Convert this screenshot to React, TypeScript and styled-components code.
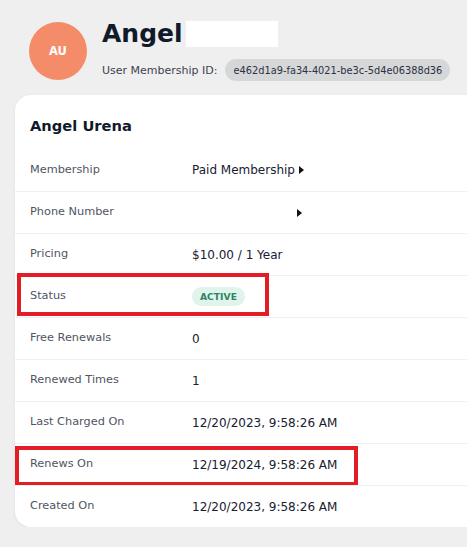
import React from 'react';
import styled, { createGlobalStyle } from 'styled-components';

const GlobalStyle = createGlobalStyle`
  body {
    margin: 0;
    background: #efefef;
    overflow: hidden;
    font-family: "DejaVu Sans", "Noto Sans", sans-serif;
    color: #172030;
  }
`;

const Page = styled.div`
  padding: 21px 0 0 15px;
`;

const Header = styled.div`
  display: flex;
  align-items: flex-start;
  gap: 15px;
  padding-left: 14px;
`;

const Avatar = styled.div`
  width: 58px;
  height: 58px;
  margin-top: 1px;
  border-radius: 50%;
  background: #f58c69;
  color: #fff;
  font-weight: 700;
  font-size: 11.5px;
  display: flex;
  align-items: center;
  justify-content: center;
`;

const HeaderText = styled.div`
  display: flex;
  flex-direction: column;
`;

const NameRow = styled.div`
  display: flex;
  align-items: center;
  height: 26px;
`;

const Name = styled.h1`
  margin: 0;
  font-size: 25px;
  font-weight: 700;
  line-height: 26px;
  color: #111a2b;
`;

const Redacted = styled.span`
  display: inline-block;
  width: 92px;
  height: 26px;
  margin-left: 3px;
  background: #fff;
`;

const IdRow = styled.div`
  display: flex;
  align-items: center;
  gap: 8px;
  margin-top: 12px;
  font-size: 11px;
  color: #3d4350;
`;

const IdPill = styled.span`
  display: inline-flex;
  align-items: center;
  height: 22px;
  padding: 0 8px;
  border-radius: 11px;
  background: #d6d7d9;
  font-size: 9.8px;
  color: #2b3140;
`;

const Card = styled.div`
  margin-top: 14px;
  background: #fff;
  border-radius: 16px 0 0 16px;
  box-shadow: 0 1px 4px rgba(0, 0, 0, 0.06);
`;

const CardTitle = styled.h2`
  margin: 0;
  padding: 20px 15px 12px;
  font-size: 14.7px;
  line-height: 22px;
  font-weight: 700;
  color: #111a2b;
`;

const Row = styled.div<{ $first?: boolean }>`
  position: relative;
  display: grid;
  grid-template-columns: 162px 1fr;
  align-items: center;
  height: 42px;
  box-sizing: border-box;
  padding-left: 15px;
  border-top: ${({ $first }) => ($first ? 'none' : '1px solid #f0f0f2')};
`;

const Label = styled.span`
  font-size: 11.3px;
  color: #4f5562;
  margin-top: -2px;
`;

const Value = styled.span`
  display: flex;
  align-items: center;
  font-size: 12px;
  color: #172030;
`;

const Caret = styled.span<{ $offset?: number }>`
  display: inline-block;
  width: 0;
  height: 0;
  margin-left: ${({ $offset }) => $offset ?? 4}px;
  border-left: 5px solid #111;
  border-top: 4px solid transparent;
  border-bottom: 4px solid transparent;
`;

const Badge = styled.span`
  display: inline-flex;
  align-items: center;
  height: 19px;
  padding: 0 8px;
  border-radius: 10px;
  background: #e0f4ec;
  color: #2e8566;
  font-size: 9.2px;
  font-weight: 700;
`;

const Highlight = styled.div<{ $left: number; $top: number; $width: number; $height: number }>`
  position: absolute;
  left: ${({ $left }) => $left}px;
  top: ${({ $top }) => $top}px;
  width: ${({ $width }) => $width}px;
  height: ${({ $height }) => $height}px;
  box-sizing: border-box;
  border: 4px solid #e31d25;
  pointer-events: none;
`;

type Detail = {
  label: string;
  value: React.ReactNode;
  mark?: { left: number; top: number; width: number; height: number };
};

const details: Detail[] = [
  { label: 'Membership', value: <>Paid Membership<Caret /></> },
  { label: 'Phone Number', value: <Caret $offset={105} /> },
  { label: 'Pricing', value: '$10.00 / 1 Year' },
  {
    label: 'Status',
    value: <Badge>ACTIVE</Badge>,
    mark: { left: 2, top: -3, width: 252, height: 43 },
  },
  { label: 'Free Renewals', value: '0' },
  { label: 'Renewed Times', value: '1' },
  { label: 'Last Charged On', value: '12/20/2023, 9:58:26 AM' },
  {
    label: 'Renews On',
    value: '12/19/2024, 9:58:26 AM',
    mark: { left: 0, top: 2, width: 343, height: 40 },
  },
  { label: 'Created On', value: '12/20/2023, 9:58:26 AM' },
];

export default function App() {
  return (
    <>
      <GlobalStyle />
      <Page>
        <Header>
          <Avatar>AU</Avatar>
          <HeaderText>
            <NameRow>
              <Name>Angel</Name>
              <Redacted />
            </NameRow>
            <IdRow>
              User Membership ID:
              <IdPill>e462d1a9-fa34-4021-be3c-5d4e06388d36</IdPill>
            </IdRow>
          </HeaderText>
        </Header>
        <Card>
          <CardTitle>Angel Urena</CardTitle>
          {details.map((d, i) => (
            <Row key={d.label} $first={i === 0}>
              <Label>{d.label}</Label>
              <Value>{d.value}</Value>
              {d.mark && (
                <Highlight
                  $left={d.mark.left}
                  $top={d.mark.top}
                  $width={d.mark.width}
                  $height={d.mark.height}
                />
              )}
            </Row>
          ))}
        </Card>
      </Page>
    </>
  );
}
